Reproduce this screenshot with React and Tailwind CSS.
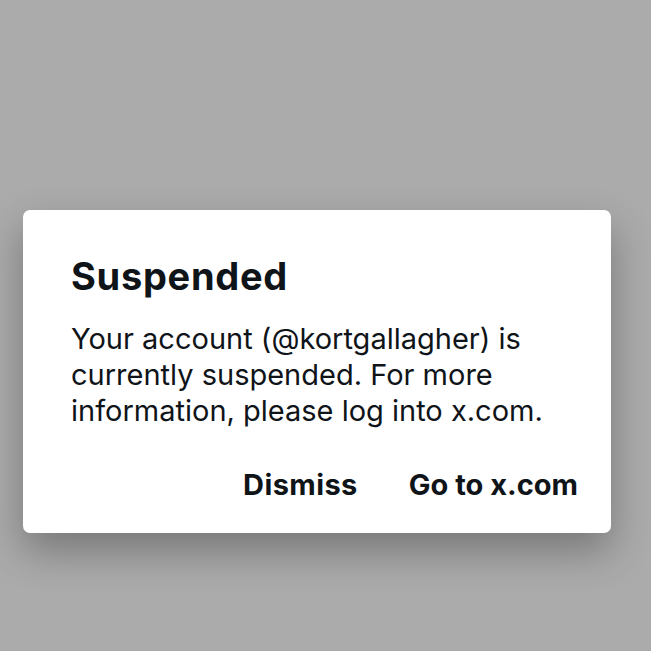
export default function App() {
  return (
    <div className="w-[651px] h-[651px] bg-[#ababab] pt-[210px] pl-[23px]" style={{ fontFamily: 'Inter, "Noto Sans", sans-serif' }}>
      <div className="w-[588px] h-[323px] bg-white rounded-[7px] shadow-[0_18px_40px_rgba(0,0,0,0.3)] pl-[48px] pr-[33px] pt-[44px]">
        <h1 className="text-[38px] leading-[44px] font-bold tracking-[0.7px] text-[#0f1419]">Suspended</h1>
        <p className="mt-[23px] text-[29px] leading-[36px] text-[#0f1419]">
          Your account (@kortgallagher) is currently suspended. For more information, please log into x.com.
        </p>
        <div className="mt-[38px] flex justify-end gap-[51px] text-[29px] leading-[36px] font-bold text-[#0f1419]">
          <button className="tracking-[0.4px]">Dismiss</button>
          <button>Go to x.com</button>
        </div>
      </div>
    </div>
  )
}
